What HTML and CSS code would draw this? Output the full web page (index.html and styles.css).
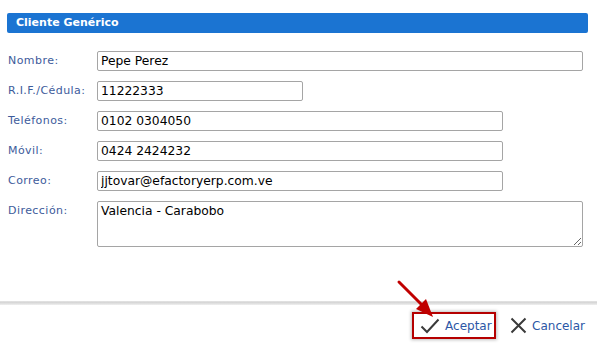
FILE: index.html
```html
<!DOCTYPE html>
<html lang="es">
<head>
    <meta charset="UTF-8">
    <meta name="viewport" content="width=device-width, initial-scale=1.0">
    <title>Cliente Genérico</title>
    <link rel="stylesheet" href="styles.css">
</head>
<body>

    <div class="dialog">
        <div class="panel">
            <div class="panel-title">Cliente Genérico</div>

            <div class="form">
                <label class="form-label" for="nombre">Nombre:</label>
                <input id="nombre" class="field field-full" type="text" value="Pepe Perez">

                <label class="form-label" for="rif">R.I.F./Cédula:</label>
                <input id="rif" class="field field-small" type="text" value="11222333">

                <label class="form-label" for="telefonos">Teléfonos:</label>
                <input id="telefonos" class="field field-medium" type="text" value="0102 0304050">

                <label class="form-label" for="movil">Móvil:</label>
                <input id="movil" class="field field-medium" type="text" value="0424 2424232">

                <label class="form-label" for="correo">Correo:</label>
                <input id="correo" class="field field-medium" type="text" value="jjtovar@efactoryerp.com.ve">

                <label class="form-label" for="direccion">Dirección:</label>
                <textarea id="direccion" class="field field-full field-area">Valencia - Carabobo</textarea>
            </div>
        </div>

        <div class="footer">
            <div class="footer-line"></div>
            <div class="footer-buttons">
                <div class="highlight">
                    <button class="action-button">
                        <svg class="icon" width="20" height="16" viewBox="0 0 20 16">
                            <path d="M1.5 8.5 L7 14 L18.5 1.5" fill="none" stroke="#3a3a3a" stroke-width="2"/>
                        </svg>
                        Aceptar
                    </button>
                </div>
                <button class="action-button">
                    <svg class="icon" width="17" height="17" viewBox="0 0 17 17">
                        <path d="M1.5 1.5 L15.5 15.5 M15.5 1.5 L1.5 15.5" fill="none" stroke="#3a3a3a" stroke-width="2"/>
                    </svg>
                    Cancelar
                </button>
            </div>
        </div>

        <!-- annotation arrow pointing at Aceptar -->
        <svg class="arrow" width="50" height="50" viewBox="0 0 50 50">
            <line x1="4" y1="4" x2="29" y2="29" stroke="#c00000" stroke-width="3" stroke-linecap="round"/>
            <polygon points="38,39 21,31 31,21" fill="#c00000"/>
        </svg>
    </div>

</body>
</html>
```

FILE: styles.css
```css
body {
    margin: 0;
    background-color: #ffffff;
    font-family: "DejaVu Sans", Verdana, sans-serif;
}

.dialog {
    position: relative;
    display: flex;
    flex-direction: column;
    height: 346px;
    overflow: hidden;
}

.panel {
    padding: 13px 9px 0 7px;
}

.panel-title {
    height: 20px;
    line-height: 20px;
    background-color: #1b74d2;
    border-radius: 2px;
    color: #ffffff;
    font-size: 11px;
    font-weight: bold;
    padding-left: 9px;
}

.form {
    display: grid;
    grid-template-columns: 90px 1fr;
    row-gap: 10px;
    margin-top: 18px;
}

.form-label {
    padding: 3px 0 0 1px;
    font-size: 11px;
    letter-spacing: 0.45px;
    color: #3d5b9b;
}

.field {
    box-sizing: border-box;
    height: 20px;
    margin: 0;
    padding: 0 3px;
    border: 1px solid #a5a5a5;
    border-radius: 2px;
    font-family: "DejaVu Sans", Verdana, sans-serif;
    font-size: 12.3px;
    color: #000000;
    outline: none;
}

.field-full {
    width: 486px;
}

.field-medium {
    width: 406px;
}

.field-small {
    width: 206px;
}

.field-area {
    height: 46px;
    padding-top: 2px;
}

.footer {
    margin-top: auto;
}

.footer-line {
    height: 4px;
    background: linear-gradient(#e4e4e4, #d6d6d6 40%, #f0f0f0);
}

.footer-buttons {
    display: flex;
    justify-content: flex-end;
    align-items: center;
    gap: 14px;
    padding: 7px 12px 7px 0;
}

.highlight {
    box-sizing: border-box;
    height: 27px;
    width: 84px;
    border: 2px solid #b50000;
    box-shadow: 0 0 3px 1px rgba(0, 0, 0, 0.25);
    display: flex;
    align-items: center;
    padding-left: 6px;
}

.action-button {
    display: flex;
    align-items: center;
    gap: 5px;
    background: transparent;
    border: none;
    padding: 0;
    font-family: "DejaVu Sans", Verdana, sans-serif;
    font-size: 12px;
    color: #2c57a6;
    cursor: pointer;
}

.icon {
    display: block;
}

.arrow {
    position: absolute;
    left: 395px;
    top: 278px;
}
```
